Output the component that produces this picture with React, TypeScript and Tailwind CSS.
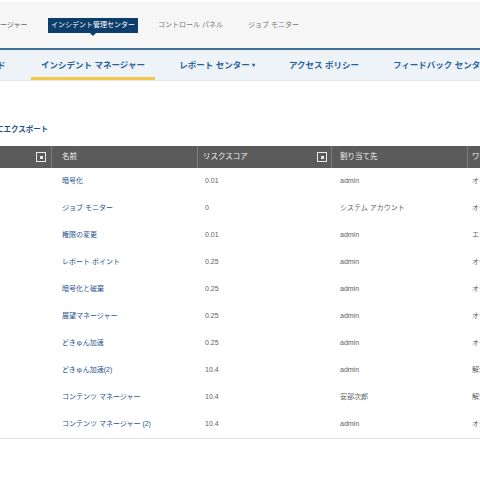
import React from "react";

const rows = [
  { name: "暗号化", risk: "0.01", who: "admin", st: "オープン" },
  { name: "ジョブ モニター", risk: "0", who: "システム アカウント", st: "オープン" },
  { name: "権限の変更", risk: "0.01", who: "admin", st: "エスカレート" },
  { name: "レポート ポイント", risk: "0.25", who: "admin", st: "オープン" },
  { name: "暗号化と破棄", risk: "0.25", who: "admin", st: "オープン" },
  { name: "展望マネージャー", risk: "0.25", who: "admin", st: "オープン" },
  { name: "どきゅん加速", risk: "0.25", who: "admin", st: "オープン" },
  { name: "どきゅん加速(2)", risk: "10.4", who: "admin", st: "解決済み" },
  { name: "コンテンツ マネージャー", risk: "10.4", who: "安部次郎", st: "解決済み" },
  { name: "コンテンツ マネージャー (2)", risk: "10.4", who: "admin", st: "オープン" },
];

function FilterIcon() {
  return (
    <span className="flex h-[10px] w-[10px] shrink-0 items-center justify-center border border-[#e8e8e8]">
      <span className="h-[3px] w-[3px] bg-[#e8e8e8]" />
    </span>
  );
}

export default function App() {
  const font = { fontFamily: '"Liberation Sans", "Noto Sans CJK JP", sans-serif' };
  return (
    <div className="h-[480px] w-[480px] overflow-hidden bg-white" style={font}>
      <div className="h-[2px] bg-white" />
      {/* top nav */}
      <div className="flex h-[48px] items-center border-b-2 border-[#3f6f94] bg-[#f6f6f6] text-[7px] text-[#666]">
        <div className="w-[48px] shrink-0 overflow-hidden whitespace-nowrap">
          <span className="ml-[-14px]">マネージャー</span>
        </div>
        <div className="relative flex h-[15px] w-[90px] shrink-0 items-center justify-center bg-[#0d3d6b] text-white">
          インシデント管理センター
          <span className="absolute left-[42px] top-[15px] h-0 w-0 border-x-[3px] border-t-[3px] border-x-transparent border-t-[#0d3d6b]" />
        </div>
        <div className="ml-[20px] w-[90px] shrink-0 whitespace-nowrap text-[#777]">コントロール パネル</div>
        <div className="shrink-0 whitespace-nowrap text-[#777]">ジョブ モニター</div>
      </div>
      {/* second nav */}
      <div className="flex h-[31px] items-stretch border-b border-[#e2e9f0] bg-[#eef3f8] text-[8.5px] text-[#2a5f9a]">
        <div className="flex w-[31px] shrink-0 items-center overflow-hidden">
          <span className="ml-[-3px] font-semibold">ド</span>
        </div>
        <div className="flex w-[124px] shrink-0 items-center justify-center whitespace-nowrap border-b-[3px] border-[#f4c94a] pt-[3px] font-semibold">
          インシデント マネージャー
        </div>
        <div className="flex w-[124px] shrink-0 items-center justify-center whitespace-nowrap font-semibold">
          レポート センター
          <span className="ml-[2px] text-[6px]">▾</span>
        </div>
        <div className="flex w-[90px] shrink-0 items-center justify-center whitespace-nowrap font-semibold">
          アクセス ポリシー
        </div>
        <div className="flex shrink-0 items-center whitespace-nowrap pl-[24px] font-semibold">
          フィードバック センター
        </div>
      </div>
      {/* export */}
      <div className="mt-[43px] h-[18px] overflow-hidden text-[7.5px] font-bold text-[#1d4f8a]">
        <span className="ml-[-4px] whitespace-nowrap">にエクスポート</span>
      </div>
      <div className="mt-[4px] w-[560px] border-b border-[#e3e3e3]">
        {/* header */}
        <div className="flex h-[22px] items-center bg-[#5b5b5b] text-[7.5px] text-[#f0f0f0]">
          <div className="flex h-full w-[52px] shrink-0 items-center justify-end border-r border-[#7d7d7d] pr-[5px]">
            <FilterIcon />
          </div>
          <div className="flex h-full w-[146px] shrink-0 items-center border-r border-[#7d7d7d] pl-[10px]">名前</div>
          <div className="flex h-full w-[134px] shrink-0 items-center justify-between border-r border-[#7d7d7d] pl-[5px] pr-[4px]">
            <span>リスクスコア</span>
            <FilterIcon />
          </div>
          <div className="flex h-full w-[136px] shrink-0 items-center border-r border-[#7d7d7d] pl-[8px]">割り当て先</div>
          <div className="flex h-full flex-1 items-center whitespace-nowrap pl-[4px]">ワークフロー</div>
        </div>
        {rows.map((r, i) => (
          <div key={i} className="flex h-[27px] items-center text-[7px] text-[#606060]">
            <div className="w-[52px] shrink-0" />
            <div className="w-[146px] shrink-0 whitespace-nowrap pl-[10px] text-[#1f528e]">{r.name}</div>
            <div className="w-[134px] shrink-0 pl-[7px]">{r.risk}</div>
            <div className="w-[136px] shrink-0 whitespace-nowrap pl-[8px]">{r.who}</div>
            <div className="flex-1 whitespace-nowrap pl-[4px]">{r.st}</div>
          </div>
        ))}
      </div>
    </div>
  );
}
